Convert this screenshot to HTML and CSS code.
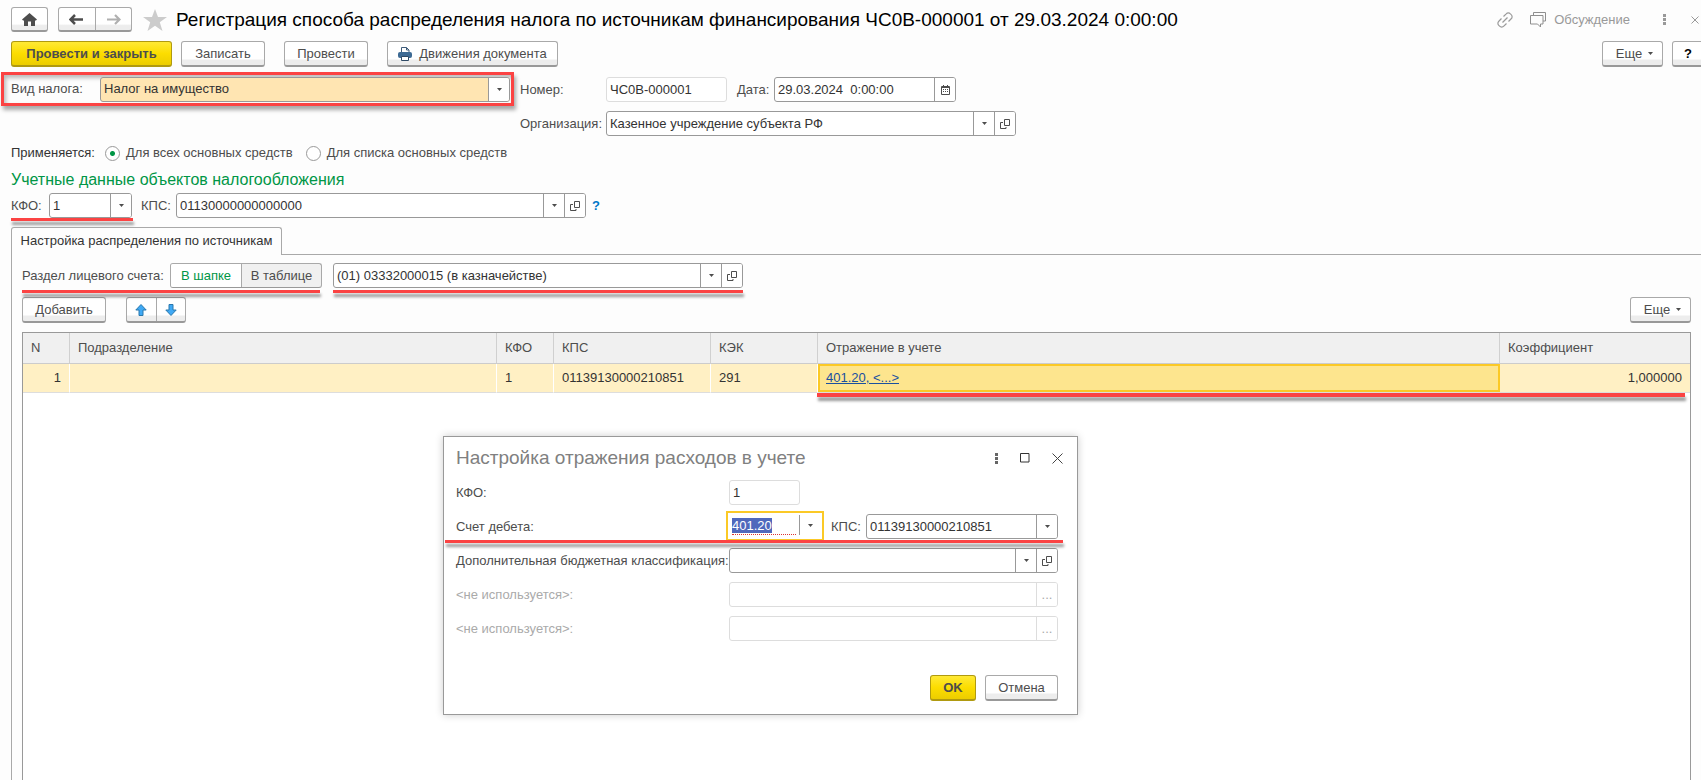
FILE: index.html
```html
<!DOCTYPE html>
<html lang="ru">
<head>
<meta charset="utf-8">
<title>Регистрация способа распределения налога</title>
<link rel="stylesheet" href="styles.css">
</head>
<body>
<svg class="defs" aria-hidden="true">
  <symbol id="open" viewBox="0 0 10 10"><path d="M4.500.5h5v6h-5zM3 3.500H.5v6h5.500V8" fill="none" stroke="#4d4d4d"/></symbol>
  <symbol id="caret" viewBox="0 0 5 3"><path d="M0 0h5L2.500 3z" fill="#4d4d4d"/></symbol>
</svg>
<main class="form">
  <header class="titlebar">
    <button class="btn home" aria-label="Домой"><svg width="15" height="13" viewBox="0 0 15 13"><path d="M7.500 0L15 6.500 13.700 7.800 13 7.200V13H9V8.500H6V13H2V7.200L1.300 7.800 0 6.500z" fill="#4d4d4d"/></svg></button>
    <div class="group nav">
      <button aria-label="Назад"><svg width="15" height="11" viewBox="0 0 15 11"><path d="M0 5.500L5.500.5v3.500H14v3H5.500v3.500z" fill="#fff"/><path d="M6 1L1.500 5.500 6 10M2 5.500h12" fill="none" stroke="#4d4d4d" stroke-width="2.500"/></svg></button>
      <button aria-label="Вперед"><svg width="15" height="11" viewBox="0 0 15 11"><path d="M9 1l4.500 4.500L9 10M1 5.500h12" fill="none" stroke="#b0b0b0" stroke-width="2.200"/></svg></button>
    </div>
    <svg class="star" width="24" height="22" viewBox="0 0 24 22"><path d="M12 0l3 8h9l-7.200 5.200L19.500 22 12 16.800 4.500 22l2.700-8.800L0 8h9z" fill="#ccc"/></svg>
    <h1>Регистрация способа распределения налога по источникам финансирования ЧС0В-000001 от 29.03.2024 0:00:00</h1>
    <div class="tools">
      <svg width="16" height="16" viewBox="0 0 16 16" fill="none" stroke="#9a9a9a" stroke-width="1.200"><path d="M6.500 4.500l2.700-2.700a2.900 2.900 0 0 1 4.200 0l.8.800a2.900 2.900 0 0 1 0 4.200l-2.700 2.700M9.500 11.500l-2.700 2.700a2.900 2.900 0 0 1-4.200 0l-.8-.8a2.900 2.900 0 0 1 0-4.200l2.700-2.700M5.500 10.500l5-5"/></svg>
      <button class="plain talk"><svg width="16" height="16" viewBox="0 0 16 16" fill="none" stroke="#8f8f8f"><path d="M3.500 3V.500h12v8.500h-2.500M.500 3.500h12.500v8.500H10.500v3l-3-3H.500z"/></svg>Обсуждение</button>
      <button class="plain dots" aria-label="Меню"><svg width="3" height="11" viewBox="0 0 3 11" fill="#999"><path d="M0 0h3v3H0zM0 4h3v3H0zM0 8h3v3H0z"/></svg></button>
      <button class="plain close" aria-label="Закрыть"><svg width="8" height="8" viewBox="0 0 8 8"><path d="M.5.5l7 7M7.500.5l-7 7" stroke="#999"/></svg></button>
    </div>
  </header>

  <div class="commands">
    <button class="btn primary">Провести и закрыть</button>
    <button class="btn write">Записать</button>
    <button class="btn post">Провести</button>
    <button class="btn moves"><svg width="14" height="14" viewBox="0 0 14 14"><path d="M3.500 6V.5h5l2.500 2.500v3" fill="#fff" stroke="#3f5c7a"/><path d="M8.500.5v2.500h2.500" fill="none" stroke="#3f5c7a"/><rect y="5" width="14" height="6" rx="2" fill="#3d6a94"/><path d="M3.500 9.500h7v4h-7z" fill="#fff" stroke="#2f4a66"/></svg>Движения документа</button>
    <button class="btn more">Еще<svg class="caret"><use href="#caret"/></svg></button>
    <button class="btn help">?</button>
  </div>

  <div class="head">
    <div class="marked">
      <label for="tax">Вид налога:</label>
      <span class="field required"><input id="tax" value="Налог на имущество"><button aria-label="Выбрать"><svg class="caret"><use href="#caret"/></svg></button></span>
    </div>
    <div class="props">
      <div class="line">
        <label class="cap" for="num">Номер:</label>
        <span class="field readonly num"><input id="num" value="ЧС0В-000001" readonly></span>
        <label class="date-cap" for="date">Дата:</label>
        <span class="field date"><input id="date" value="29.03.2024  0:00:00"><button aria-label="Календарь"><svg width="9" height="10" viewBox="0 0 9 10"><path d="M.5 1.500h8v8h-8zM2.500 0v2M6.500 0v2M.5 2.500h8" fill="none" stroke="#4d4d4d"/><path d="M2 4.500h5M2 6.500h5" stroke="#4d4d4d" stroke-dasharray="1 1"/></svg></button></span>
      </div>
      <div class="line">
        <label class="cap" for="org">Организация:</label>
        <span class="field long"><input id="org" value="Казенное учреждение субъекта РФ"><button aria-label="Выбрать"><svg class="caret"><use href="#caret"/></svg></button><button aria-label="Открыть"><svg class="open"><use href="#open"/></svg></button></span>
      </div>
    </div>
  </div>

  <div class="radios">
    <span class="applies">Применяется:</span>
    <label><input type="radio" name="scope" checked>Для всех основных средств</label>
    <label><input type="radio" name="scope">Для списка основных средств</label>
  </div>

  <h2>Учетные данные объектов налогообложения</h2>
  <div class="account">
    <div class="kfo underlined"><label for="kfo">КФО:</label><span class="field"><input id="kfo" value="1"><button aria-label="Выбрать"><svg class="caret"><use href="#caret"/></svg></button></span></div>
    <label for="kps">КПС:</label>
    <span class="field long"><input id="kps" value="01130000000000000"><button aria-label="Выбрать"><svg class="caret"><use href="#caret"/></svg></button><button aria-label="Открыть"><svg class="open"><use href="#open"/></svg></button></span>
    <a class="hint" href="#">?</a>
  </div>

  <div class="tabs"><button class="tab">Настройка распределения по источникам</button></div>
  <section class="panel">
    <div class="section-row">
      <div class="switch underlined"><span>Раздел лицевого счета:</span><div class="group"><button class="on">В шапке</button><button>В таблице</button></div></div>
      <div class="underlined"><span class="field long"><input aria-label="Раздел лицевого счета" value="(01) 03332000015 (в казначействе)"><button aria-label="Выбрать"><svg class="caret"><use href="#caret"/></svg></button><button aria-label="Открыть"><svg class="open"><use href="#open"/></svg></button></span></div>
    </div>
    <div class="table-bar">
      <button class="btn add">Добавить</button>
      <div class="group arrows">
        <button aria-label="Вверх"><svg width="12" height="12" viewBox="0 0 12 12"><path d="M6 .5L11.200 6H8v5.500H4V6H.8z" fill="#3fa9f5" stroke="#2a78ad"/></svg></button>
        <button aria-label="Вниз"><svg width="12" height="12" viewBox="0 0 12 12"><path d="M6 11.500L.8 6H4V.5h4V6h3.200z" fill="#3fa9f5" stroke="#2a78ad"/></svg></button>
      </div>
      <button class="btn more">Еще<svg class="caret"><use href="#caret"/></svg></button>
    </div>
    <div class="grid">
      <table>
        <colgroup><col class="c-n"><col class="c-dep"><col class="c-kfo"><col class="c-kps"><col class="c-kek"><col><col class="c-coef"></colgroup>
        <thead><tr><th>N</th><th>Подразделение</th><th>КФО</th><th>КПС</th><th>КЭК</th><th>Отражение в учете</th><th>Коэффициент</th></tr></thead>
        <tbody><tr><td class="right">1</td><td></td><td>1</td><td>01139130000210851</td><td>291</td><td class="current"><a href="#">401.20, &lt;...&gt;</a></td><td class="right">1,000000</td></tr></tbody>
      </table>
      <div class="row-mark"></div>
    </div>
  </section>
</main>

<section class="dialog" role="dialog" aria-labelledby="dlg">
  <header>
    <h3 id="dlg">Настройка отражения расходов в учете</h3>
    <button class="plain" aria-label="Меню"><svg width="3" height="11" viewBox="0 0 3 11" fill="#666"><path d="M0 0h3v3H0zM0 4h3v3H0zM0 8h3v3H0z"/></svg></button>
    <button class="plain" aria-label="Развернуть"><svg width="10" height="10" viewBox="0 0 10 10"><path d="M.5.500h8.500v8.500H.5z" fill="none" stroke="#333"/></svg></button>
    <button class="plain" aria-label="Закрыть"><svg width="11" height="11" viewBox="0 0 11 11"><path d="M.5.5l10 10M10.500.5l-10 10" stroke="#444"/></svg></button>
  </header>
  <div class="rows">
    <label for="d1">КФО:</label>
    <div><span class="field readonly small"><input id="d1" value="1" readonly></span></div>
    <span id="d2-label">Счет дебета:</span>
    <div class="debit">
      <div class="focus"><span class="editor" role="textbox" aria-labelledby="d2-label" contenteditable="true"><mark>401.20</mark></span><button aria-label="Выбрать"><svg class="caret"><use href="#caret"/></svg></button></div>
      <label for="d3">КПС:</label>
      <span class="field grow"><input id="d3" value="01139130000210851"><button aria-label="Выбрать"><svg class="caret"><use href="#caret"/></svg></button></span>
    </div>
    <label for="d4">Дополнительная бюджетная классификация:</label>
    <span class="field"><input id="d4"><button aria-label="Выбрать"><svg class="caret"><use href="#caret"/></svg></button><button aria-label="Открыть"><svg class="open"><use href="#open"/></svg></button></span>
    <label class="off" for="d5">&lt;не используется&gt;:</label>
    <span class="field disabled"><input id="d5" disabled><button disabled>...</button></span>
    <label class="off" for="d6">&lt;не используется&gt;:</label>
    <span class="field disabled"><input id="d6" disabled><button disabled>...</button></span>
    <div class="debit-mark"></div>
  </div>
  <footer><button class="btn primary">OK</button><button class="btn">Отмена</button></footer>
</section>
</body>
</html>
```
FILE: styles.css
```css
* { box-sizing: border-box; }
body {
  margin: 0;
  position: relative;
  overflow: hidden;
  height: 100vh;
  background: #fdfdfd;
  color: #4d4d4d;
  font: 13px/16px "Liberation Sans", Arial, sans-serif;
}
button, input { font: inherit; color: inherit; }
button { padding: 0; border: 0; background: none; display: flex; align-items: center; justify-content: center; white-space: nowrap; }
svg { flex: none; display: block; }
label { white-space: nowrap; }
h1, h2, h3 { margin: 0; font-weight: normal; white-space: nowrap; }
.defs { position: absolute; width: 0; height: 0; }
.caret { width: 5px; height: 3px; }
.open { width: 10px; height: 10px; }

.form { display: flex; flex-direction: column; height: 100%; padding: 7px 0 0 11px; }

.btn, .group {
  height: 26px;
  border: 1px solid #a9a9a9;
  border-bottom: 2px solid #999;
  border-radius: 3px;
  background: linear-gradient(#fff 0, #fff 72%, #ededed 80%, #ededed);
}
.btn { padding: 0 13px; }
.btn.primary { background: linear-gradient(#ffe936, #fcdd00 50%, #eccd00); border-color: #b09a10; font-weight: bold; }
.group { display: flex; overflow: hidden; }
.group button { flex: 1; }
.group button + button { border-left: 1px solid #a9a9a9; }

.titlebar { display: flex; align-items: center; height: 25px; }
.titlebar .btn, .titlebar .group { height: 25px; }
.home { width: 37px; padding: 0; }
.nav { width: 74px; margin-left: 10px; }
.star { margin: 0 9px 0 11px; }
h1 { color: #000; font-size: 19px; line-height: 22px; }
.tools { display: flex; align-items: center; margin-left: auto; color: #999; }
.talk { gap: 8px; margin-left: 17px; }
.dots { margin-left: 33px; }
.close { margin: 0 2px 0 25px; }

.commands { display: flex; margin-top: 9px; }
.commands .primary { width: 161px; }
.write { width: 84px; margin-left: 9px; }
.post { width: 84px; margin-left: 19px; }
.moves { width: 171px; margin-left: 19px; gap: 7px; padding: 0; }
.more { gap: 6px; width: 61px; padding: 0 0 0 4px; margin-left: auto; }
.help { width: 32px; margin: 0 -3px 0 9px; color: #000; font-weight: bold; flex: none; padding: 0; }

.field { display: flex; height: 25px; border: 1px solid #999; border-radius: 3px; background: #fff; overflow: hidden; color: #333; }
.field input { flex: 1; min-width: 0; width: 100%; padding: 0 3px; border: 0; outline: 0; background: transparent; }
.field button { width: 21px; border-left: 1px solid #999; background: #fff; flex: none; }
.long { width: 410px; }
.readonly { border-color: #ddd; }
.disabled { border-color: #ddd; }
.disabled button { border-color: #ddd; color: #aaa; }

.head { display: flex; margin-top: 5px; margin-left: -10px; }
.marked { display: flex; align-items: center; width: 513px; height: 34px; padding: 0 1px 0 7px; border: 3px solid #fb4343; box-shadow: 2px 4px 4px #0005, inset 2px 3px 4px #0004; }
.marked label { width: 89px; }
.marked .field { flex: 1; }
.required { background: #ffe5b2; }
.props { display: flex; flex-direction: column; gap: 9px; margin-left: 6px; padding-top: 5px; }
.line { display: flex; align-items: center; }
.cap { width: 86px; }
.num { width: 121px; }
.date-cap { margin-left: 10px; width: 37px; }
.date { width: 182px; }
.date input { white-space: pre; }

.radios { display: flex; align-items: center; margin-top: 9px; }
.applies { width: 94px; color: #333; }
.radios label { display: flex; align-items: center; gap: 6px; margin-right: 13px; }
.radios input { appearance: none; width: 15px; height: 15px; margin: 0; border: 1px solid #999; border-radius: 50%; background: #fff; }
.radios input:checked { background: radial-gradient(circle, #009646 2px, #fff 3px); }
h2 { margin-top: 9px; color: #009646; font-size: 16px; line-height: 20px; }

.account { display: flex; align-items: center; margin-top: 3px; }
.underlined { position: relative; }
.underlined::after, .row-mark, .debit-mark { content: ""; position: absolute; left: 0; right: 0; height: 3px; background: #fb4343; box-shadow: 1px 4px 3px #0006; }
.underlined::after { top: 27px; }
.kfo { display: flex; align-items: center; width: 121px; margin-right: 9px; }
.kfo::after { right: -1px; top: 25px; }
.kfo label { width: 38px; }
.kfo .field { width: 83px; }
.account > label { width: 35px; }
.hint { margin-left: 6px; color: #0077c8; font-weight: bold; text-decoration: none; }

.tabs { display: flex; margin-top: 9px; position: relative; }
.tab { height: 28px; padding: 0 9px 2px; width: 271px; border: 1px solid #a9a9a9; border-bottom: 0; border-radius: 3px 3px 0 0; background: #fdfdfd; color: #333; margin-bottom: -1px; position: relative; }
.panel { display: flex; flex-direction: column; flex: 1; border: solid #a9a9a9; border-width: 1px 0 0 1px; padding: 8px 10px 0; }
.section-row { display: flex; gap: 11px; }
.switch { display: flex; align-items: center; width: 300px; }
.switch::after { right: 2px; }
.switch > span { width: 148px; white-space: nowrap; }
.switch .group { flex: 1; height: 25px; border-bottom-width: 1px; background: #f0f0f0; }
.switch .on { flex: 0 0 70px; background: #fff; color: #009646; }
.table-bar { display: flex; margin-top: 9px; }
.add { width: 84px; }
.arrows { width: 60px; margin-left: 20px; }

.grid { position: relative; flex: 1; margin-top: 9px; border: 1px solid #999; border-bottom: 0; background: #fff; }
table { width: 100%; table-layout: fixed; border-collapse: separate; border-spacing: 0; }
th { height: 31px; padding: 0 8px; background: #f0f0f0; border-right: 1px solid #d0d0d0; border-bottom: 1px solid #ccc; font-weight: normal; text-align: left; }
td { height: 29px; padding: 0 8px; background: #fff0c4; border-right: 1px solid #fff; border-bottom: 1px solid #ddd; color: #333; }
th:last-child, td:last-child { border-right: 0; }
.right { text-align: right; }
.current { background: #fde58e; border-right: 0; box-shadow: inset 0 0 0 2px #fbc926; }
.current a { color: #1a50a0; }
.c-n { width: 47px; }
.c-dep { width: 427px; }
.c-kfo { width: 57px; }
.c-kps { width: 157px; }
.c-kek { width: 107px; }
.c-coef { width: 190px; }
.row-mark { left: 794px; right: 5px; top: 60px; height: 4px; }

.dialog { position: absolute; left: 443px; top: 436px; width: 635px; padding: 10px 19px 13px 12px; border: 1px solid #999; background: #fff; box-shadow: 0 0 8px #0003; }
.dialog header { display: flex; align-items: center; gap: 22px; height: 22px; margin-right: -5px; }
h3 { color: #808080; font-size: 19px; line-height: 22px; margin-right: auto; }
.rows { position: relative; display: grid; grid-template-columns: 273px 1fr; row-gap: 9px; align-items: center; margin-top: 11px; }
.small { width: 71px; }
.debit { display: flex; align-items: center; height: 25px; }
.focus { display: flex; align-self: flex-start; width: 98px; height: 30px; margin: -3px 7px 0 -3px; border: 2px solid #fbc926; background: #fff; color: #333; padding: 2px 2px 4px 4px; flex: none; }
.editor { flex: 1; outline: 0; padding-top: 3px; border-bottom: 1px dotted #d33; margin-right: 3px; }
mark { background: #5068bc; color: #fff; }
.focus button { width: 21px; border-left: 1px solid #999; }
.debit label { width: 35px; }
.grow { flex: 1; }
.off { color: #aaa; }
.debit-mark { left: -11px; right: -5px; top: 60px; }
.dialog footer { display: flex; justify-content: flex-end; gap: 9px; margin-top: 34px; }
.dialog footer .primary { width: 46px; }
.dialog footer .btn:last-child { width: 73px; }
```
